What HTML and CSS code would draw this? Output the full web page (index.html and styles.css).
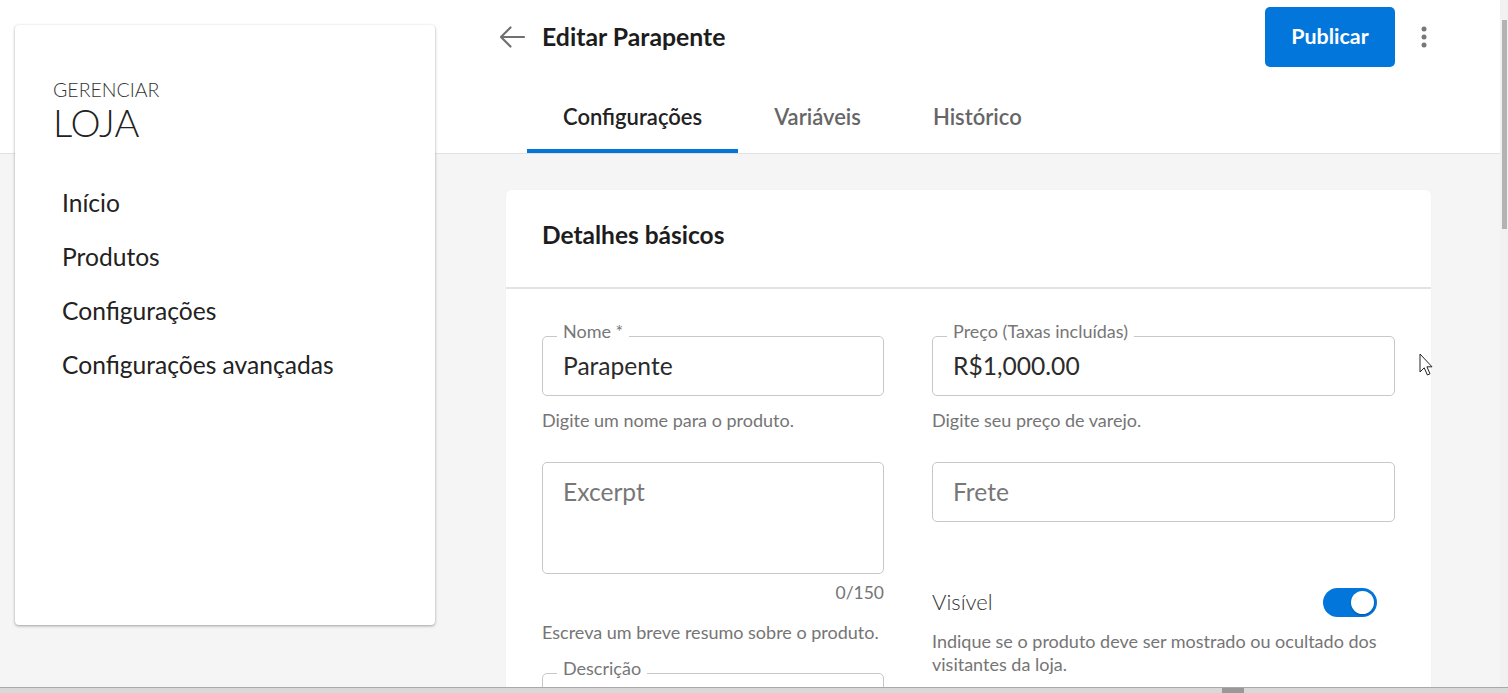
FILE: index.html
```html
<!DOCTYPE html>
<html lang="pt-BR">
<head>
<meta charset="utf-8">
<title>Editar Parapente</title>
<link rel="stylesheet" href="styles.css">
</head>
<body>
<div class="window">
  <div class="viewport">
    <div class="page">
      <aside class="sidebar">
        <div class="brand-small">GERENCIAR</div>
        <div class="brand-big">LOJA</div>
        <nav class="nav">
          <a class="nav-item">Início</a>
          <a class="nav-item">Produtos</a>
          <a class="nav-item">Configurações</a>
          <a class="nav-item">Configurações avançadas</a>
        </nav>
      </aside>

      <main class="main">
        <div class="topbar">
          <span class="back">
            <svg width="26" height="22" viewBox="0 0 26 22"><path d="M25 11H2M11.5 1.5L2 11l9.5 9.5" fill="none" stroke="#707070" stroke-width="2.2" stroke-linecap="round" stroke-linejoin="round"/></svg>
          </span>
          <h1 class="title">Editar Parapente</h1>
          <button class="publish">Publicar</button>
          <span class="kebab">
            <svg width="24" height="24" viewBox="0 0 24 24"><circle cx="12" cy="4" r="2.5" fill="#777"/><circle cx="12" cy="12" r="2.5" fill="#777"/><circle cx="12" cy="20" r="2.5" fill="#777"/></svg>
          </span>
        </div>

        <div class="tabs">
          <div class="tab active">Configurações</div>
          <div class="tab">Variáveis</div>
          <div class="tab">Histórico</div>
        </div>

        <section class="card">
          <div class="card-head">Detalhes básicos</div>
          <div class="card-body">
            <div class="col">
              <div class="outlined">
                <span class="legend">Nome *</span>
                <span class="value">Parapente</span>
              </div>
              <div class="helper first">Digite um nome para o produto.</div>
              <div class="outlined area">
                <span class="placeholder">Excerpt</span>
              </div>
              <div class="counter">0/150</div>
              <div class="helper summary">Escreva um breve resumo sobre o produto.</div>
              <div class="outlined desc">
                <span class="legend">Descrição</span>
              </div>
            </div>
            <div class="col">
              <div class="outlined">
                <span class="legend">Preço (Taxas incluídas)</span>
                <span class="value">R$1,000.00</span>
              </div>
              <div class="helper first">Digite seu preço de varejo.</div>
              <div class="outlined frete">
                <span class="placeholder">Frete</span>
              </div>
              <div class="switch-row">
                <span class="switch-label">Visível</span>
                <span class="switch"><span class="knob"></span></span>
              </div>
              <div class="helper vis">Indique se o produto deve ser mostrado ou ocultado dos visitantes da loja.</div>
            </div>
          </div>
        </section>
      </main>

      <svg class="cursor" width="14" height="24" viewBox="0 0 14 24"><path d="M1 1v18l4.2-4.2 3.2 7.2 2.6-1.2-3.1-7H13z" fill="#fff" stroke="#222" stroke-width="1"/></svg>
    </div>
    <div class="vscroll"><div class="vthumb"></div></div>
  </div>
  <div class="hscroll"><div class="hthumb"></div></div>
</div>
</body>
</html>
```

FILE: styles.css
```css
* { box-sizing: border-box; }
html, body { margin: 0; padding: 0; overflow: hidden; }
body {
  width: 1508px;
  height: 693px;
  font-family: "Lato", "Noto Sans", sans-serif;
  color: #222;
  background: #f5f5f5;
}
.window { display: flex; flex-direction: column; width: 1508px; height: 693px; }
.viewport { display: flex; height: 687px; }
.page {
  position: relative;
  width: 1500px;
  height: 687px;
  overflow: hidden;
  display: flex;
  align-items: flex-start;
  background: linear-gradient(to bottom, #ffffff 0, #ffffff 153px, #e2e2e2 153px, #e2e2e2 154px, #f5f5f5 154px);
}
.vscroll { width: 8px; height: 687px; background: #f1f1f1; padding: 20px 1px 0 2px; }
.vthumb { width: 5px; height: 209px; background: #b3b3b3; }
.hscroll {
  height: 6px;
  background: #d9d9d9;
  border-top: 1px solid #a9a9a9;
  padding-left: 1222px;
}
.hthumb { width: 22px; height: 5px; background: #999; }

/* Sidebar */
.sidebar {
  width: 420px;
  height: 600px;
  margin: 25px 0 0 15px;
  background: #fff;
  border-radius: 4px;
  box-shadow: 0 1px 3px rgba(0,0,0,0.35), 0 0 1px rgba(0,0,0,0.06);
  padding: 54px 0 0 38px;
  flex: none;
}
.brand-small { font-size: 19.5px; line-height: 22px; font-weight: 300; color: #333; }
.brand-big { font-size: 38px; line-height: 42px; font-weight: 300; color: #222; }
.nav { display: flex; flex-direction: column; margin-top: 33px; }
.nav-item { display: block; font-size: 24.6px; line-height: 54px; padding-left: 9px; color: #222; }

/* Main */
.main { width: 925px; margin-left: 71px; flex: none; }
.topbar {
  display: flex;
  align-items: center;
  height: 60px;
  margin: 7px -5px 0 -7px;
}
.back { width: 26px; height: 22px; display: flex; margin-right: 17px; }
.title { margin: 0 0 2px; font-size: 24.8px; font-weight: 700; color: #1d1d1d; flex: 1; }
.publish {
  height: 60px;
  width: 130px;
  border: none;
  border-radius: 5px;
  background: #0376dc;
  color: #fff;
  font-family: inherit;
  font-size: 21.4px;
  font-weight: 700;
  padding: 0 0 2px;
}
.kebab { width: 24px; height: 24px; display: flex; margin-left: 17px; }

.tabs { display: flex; margin: 13px 0 0 21px; }
.tab {
  padding: 25px 36px 20px;
  font-size: 22px;
  line-height: 24px;
  font-weight: 600;
  color: #666;
  border-bottom: 4px solid transparent;
}
.tab.active { color: #222; border-bottom-color: #0376dc; }

.card {
  margin-top: 37px;
  background: #fff;
  border-radius: 5px;
  box-shadow: 0 0 1px rgba(0,0,0,0.08);
  height: 600px;
}
.card-head {
  padding: 33px 36px 40px;
  font-size: 24.5px;
  line-height: 24px;
  font-weight: 700;
  color: #1d1d1d;
  border-bottom: 2px solid #e3e3e3;
}
.card-body {
  display: grid;
  grid-template-columns: 342px 463px;
  column-gap: 48px;
  align-items: start;
  padding: 47px 36px 0;
}
.col { display: flex; flex-direction: column; }

.outlined {
  position: relative;
  height: 60px;
  border: 1px solid #c8c8c8;
  border-radius: 5px;
  display: flex;
  align-items: center;
  padding: 0 20px 2px;
  font-size: 24.6px;
}
.legend {
  position: absolute;
  top: -17px;
  left: 14px;
  padding: 0 6px;
  background: #fff;
  font-size: 18px;
  line-height: 22px;
  color: #777;
}
.value { color: #2b2b2b; }
.placeholder { color: #777; }
.outlined.area { height: 112px; align-items: flex-start; padding-top: 14px; margin-top: 32px; }
.outlined.frete { margin-top: 32px; }
.outlined.desc { margin-top: 31px; }
.helper { font-size: 18px; line-height: 20px; color: #757575; }
.helper.first { margin-top: 14px; }
.counter { margin-top: 9px; text-align: right; font-size: 17.5px; line-height: 20px; color: #757575; }
.helper.summary { margin-top: 19px; }

.switch-row {
  display: flex;
  align-items: center;
  justify-content: space-between;
  margin-top: 66px;
  padding-right: 18px;
  height: 29px;
}
.switch-label { font-size: 22px; font-weight: 300; color: #333; margin-bottom: 3px; }
.switch {
  width: 54px;
  height: 29px;
  border-radius: 15px;
  background: #0376dc;
  display: flex;
  align-items: center;
  justify-content: flex-end;
  padding-right: 3px;
}
.knob { width: 23px; height: 23px; border-radius: 50%; background: #fff; box-shadow: 0 1px 2px rgba(0,0,0,0.3); }
.helper.vis { margin-top: 13px; line-height: 23px; }

.cursor { position: absolute; left: 1419px; top: 353px; }
```
